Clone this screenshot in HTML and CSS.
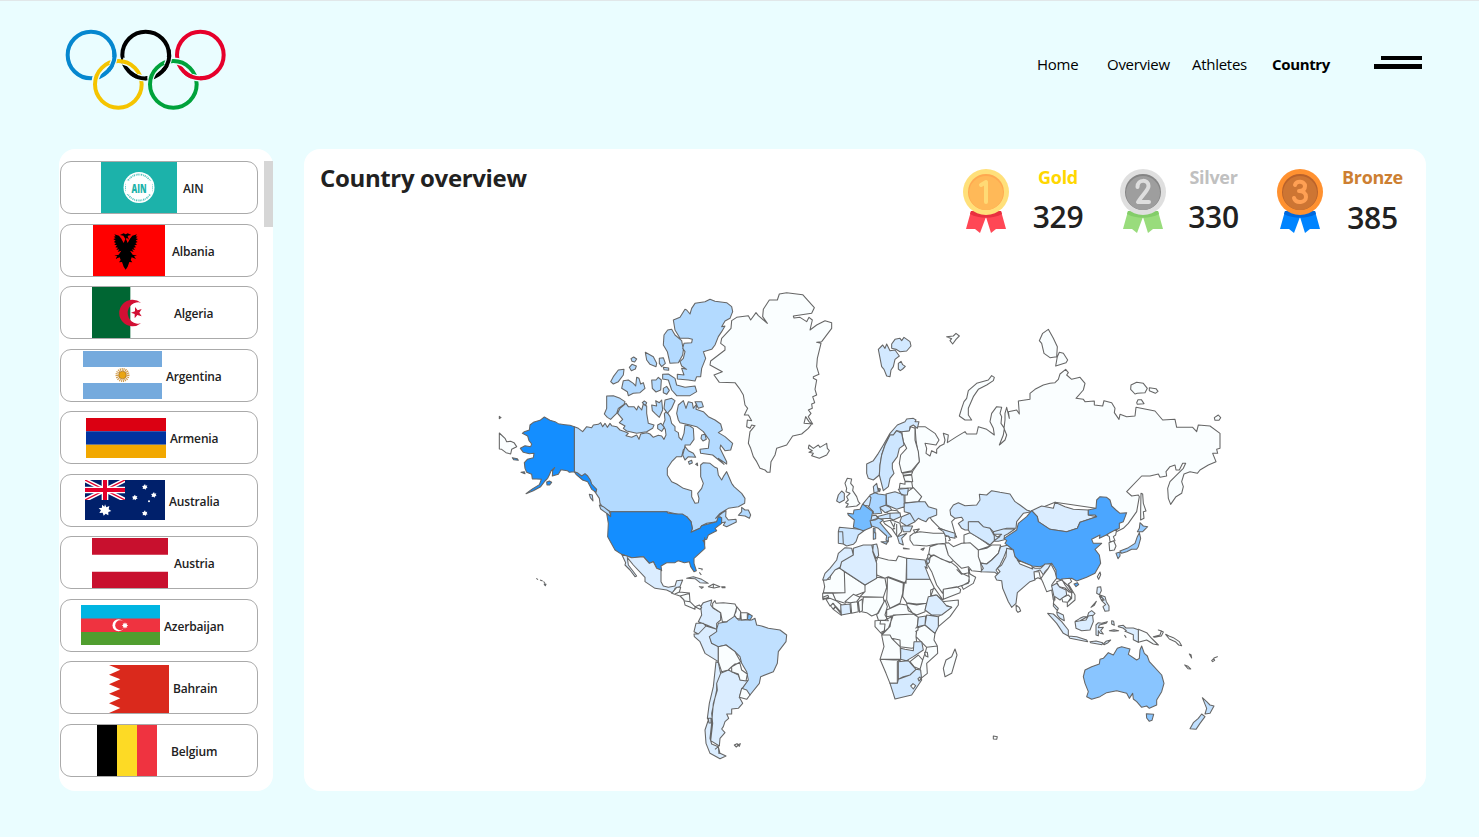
FILE: index.html
```
<!DOCTYPE html>
<html lang="en">
<head>
<meta charset="utf-8">
<title>Country overview</title>
<link rel="stylesheet" href="styles.css">
</head>
<body>
<header class="header">
  <svg class="logo" viewBox="75 87 486 246" fill="none" stroke-width="12">
    <circle cx="153" cy="165" r="70" stroke="#0687cf"/><circle cx="317" cy="165" r="70" stroke="#000"/><circle cx="481" cy="165" r="70" stroke="#e6002b"/>
    <g stroke="#eafdff" stroke-width="21"><path d="M166 268A70 70 0 0 1 242 184M248 183A70 70 0 0 1 281 200M330 268A70 70 0 0 1 382 186M396 183A70 70 0 0 1 446 200"/></g>
    <circle cx="235" cy="253" r="70" stroke="#f5c400"/><circle cx="400" cy="253" r="70" stroke="#00a23b"/>
    <path stroke="#eafdff" stroke-width="19" d="M223 172A70 70 0 0 1 216 196M387 172A70 70 0 0 1 380 196M316 235A70 70 0 0 1 290 230M480 235A70 70 0 0 1 454 230"/>
    <path stroke="#0687cf" d="M222 150A70 70 0 0 1 206 211"/><path stroke="#000" d="M386 150A70 70 0 0 1 370 211M322 235A70 70 0 0 1 272 219"/><path stroke="#e6002b" d="M490 234A70 70 0 0 1 436 219"/>
  </svg>
  <nav class="nav">
    <a class="nav-home">Home</a><a class="nav-overview">Overview</a><a class="nav-athletes">Athletes</a><a class="nav-country active">Country</a>
    <div class="burger"><i></i><i></i></div>
  </nav>
</header>
<main class="layout">
  <aside class="sidebar">
    <ul class="countries">
      <li><svg class="flag ain" viewBox="0 0 76 51"><path fill="#1cb2aa" d="M0 0h76v51H0z"/><circle cx="38" cy="25.500" r="15.500" fill="#fff"/><circle cx="38" cy="25.500" r="13" fill="none" stroke="#1cb2aa" stroke-width="1.800" stroke-dasharray="1.300 .9 .8 .7" opacity=".75"/><path fill="#fff" d="M25 19h26v13H25z"/><text class="ain-text" x="38" y="30.500" text-anchor="middle" textLength="15" lengthAdjust="spacingAndGlyphs">AIN</text></svg><span>AIN</span></li>
      <li><svg class="flag alb" viewBox="0 0 216 153"><path fill="red" d="M0 0h216v153H0z"/><path d="M108 44l-5-13-11-6-11 5 10 2 6 10-5 12-7-13-7-9-14-4 4 6-6 1 6 5-7 2 7 5-6 4 7 3-5 5 8 2-5 6 8 1-5 7 9-2-5 8 11-4-8 12-13 3 9 2-6 8 13-5 3 8-5 7 9-1 5 14 6 9 6-9 5-14 9 1-5-7 3-8 13 5-6-8 9-2-13-3-8-12 11 4-5-8 9 2-5-7 8-1-5-6 8-2-5-5 7-3-6-4 7-5-7-2 6-5-6-1 4-6-14 4-7 9-7 13-5-12 6-10 10-2-11-5-11 6z"/></svg><span>Albania</span></li>
      <li><svg class="flag alg" viewBox="0 0 231 153"><path fill="#063" d="M0 0h115v153H0z"/><path fill="#d21034" d="M147 47a40 40 0 1 0 0 62a32 32 0 1 1 0-62zM117 77l12-4 0-13 8 10 12-4-7 11 7 11-13-4-8 10 0-13z"/></svg><span>Algeria</span></li>
      <li><svg class="flag arg" viewBox="0 0 79 48"><path fill="#75aadd" d="M0 0h79v16H0zM0 32h79v16H0z"/><circle cx="39.500" cy="24" r="5.500" fill="none" stroke="#d09a48" stroke-width="3" stroke-dasharray="1 .75"/><circle cx="39.500" cy="24" r="3.800" fill="#e9a512" stroke="#9a641c" stroke-width=".6"/></svg><span>Argentina</span></li>
      <li><svg class="flag arm" viewBox="0 0 80 39" preserveAspectRatio="none"><path fill="#db0012" d="M0 0h80v13H0z"/><path fill="#0033a0" d="M0 13h80v13H0z"/><path fill="#f2a800" d="M0 26h80v13H0z"/></svg><span>Armenia</span></li>
      <li><svg class="flag aus" viewBox="0 0 240 120"><path fill="#00206b" d="M0 0h240v120H0z"/><svg width="120" height="60" viewBox="0 0 120 60"><path stroke="#fff" stroke-width="13" d="M0 0l120 60M120 0L0 60"/><path stroke="#e4002b" stroke-width="4" d="M0 0l120 60M120 0L0 60"/><path stroke="#fff" stroke-width="20" d="M60 0v60M0 30h120"/><path stroke="#e4002b" stroke-width="12" d="M60 0v60M0 30h120"/></svg><g fill="#fff"><path d="M60 73l4 9 9-4-2 10 8 5-9 3 0 10-8-5-6 6-3-9-10 1 5-8-7-6 10-2 0-9 7 6z"/><path id="star" d="M180 12l2 5 5-1-2 5 3 3-5 1-1 4-4-3-5 1 1-5-3-4 5-1z"/><use href="#star" x="-30" y="32"/><use href="#star" x="27" y="24"/><use href="#star" y="79"/><circle cx="192" cy="64" r="3"/></g></svg><span>Australia</span></li>
      <li><svg class="flag aut" viewBox="0 0 76 50"><path fill="#c8102e" d="M0 0h76v16.700H0zM0 33.700h76V50H0z"/></svg><span>Austria</span></li>
      <li><svg class="flag aze" viewBox="0 0 79 40"><path fill="#00b5e2" d="M0 0h79v14H0z"/><path fill="#ef3340" d="M0 13.500h79V27H0z"/><path fill="#509e2f" d="M0 27h79v13H0z"/><circle cx="37.500" cy="20.300" r="6" fill="#fff"/><circle cx="39.200" cy="20.300" r="5" fill="#ef3340"/><path fill="#fff" d="M44 17.200l.7 1.600 1.600-.6-.6 1.600 1.500.7-1.500.7.6 1.600-1.600-.6-.7 1.600-.7-1.600-1.600.6.6-1.600-1.500-.7 1.500-.7-.6-1.600 1.600.6z"/></svg><span>Azerbaijan</span></li>
      <li><svg class="flag bhr" viewBox="0 0 180 144"><path fill="#da291c" d="M180 0v144H0l34-15L0 115l34-15L0 86l34-14L0 58l34-15L0 29l34-15L0 0z"/></svg><span>Bahrain</span></li>
      <li><svg class="flag bel" viewBox="0 0 60 51"><path d="M0 0h20v51H0z"/><path fill="#fdda25" d="M20 0h20v51H20z"/><path fill="#ef3340" d="M40 0h20v51H40z"/></svg><span>Belgium</span></li>
    </ul>
    <div class="scrollbar"></div>
  </aside>
  <section class="card">
    <div class="card-head">
      <h1>Country overview</h1>
      <div class="medals">
        <div class="medal gold">
          <svg viewBox="0 0 46 64"><path fill="#ff4755" d="M8 42h15v6l-6 16-5-4H3zM38 42H23v6l5 16 5-4h10z"/><path fill="#e8303f" d="M8 42h30l1 3c-9 5-23 5-32 0z"/><circle cx="23" cy="23" r="23" fill="#ffe07a"/><circle cx="23" cy="23" r="18" fill="#ffa850"/><circle cx="23" cy="24" r="17" fill="#ffb958"/><path class="digit" stroke="#ffda75" d="M18 16l5-3v20"/></svg>
          <div><b>Gold</b><strong>329</strong></div>
        </div>
        <div class="medal silver">
          <svg viewBox="0 0 46 64"><path fill="#99dc7c" d="M8 42h15v6l-6 16-5-4H3zM38 42H23v6l5 16 5-4h10z"/><path fill="#83cd69" d="M8 42h30l1 3c-9 5-23 5-32 0z"/><circle cx="23" cy="23" r="23" fill="#dfdfdf"/><circle cx="23" cy="23" r="18" fill="#858585"/><circle cx="23" cy="24" r="17" fill="#9e9e9e"/><path class="digit" stroke="#dedede" d="M17.500 18c0-8 11-8 11-1 0 4-4 6-10.500 16H29"/></svg>
          <div><b>Silver</b><strong>330</strong></div>
        </div>
        <div class="medal bronze">
          <svg viewBox="0 0 46 64"><path fill="#0084ff" d="M8 42h15v6l-6 16-5-4H3zM38 42H23v6l5 16 5-4h10z"/><path fill="#0068dd" d="M8 42h30l1 3c-9 5-23 5-32 0z"/><circle cx="23" cy="23" r="23" fill="#ff9130"/><circle cx="23" cy="23" r="18" fill="#b9622b"/><circle cx="23" cy="24" r="17" fill="#cd7533"/><path class="digit" stroke="#ffa054" d="M18 16c1-5 10-4 10 1 0 4-3 5-6 5 4 0 7 2 7 6 0 6-10 7-12 1"/></svg>
          <div><b>Bronze</b><strong>385</strong></div>
        </div>
      </div>
    </div>
    <svg class="map" viewBox="0 0 2190 1440">
      <g class="none">
        <path d="M28 459L45 475 50 485 62 484 72 488 80 500 65 508 62 522 48 518 35 508 28 507ZM28 409l5 4-5 3z"/>
      </g>
      <g class="canada">
        <path d="M253 440L265 445 278 455 290 440 305 443 310 435 325 433 332 428 338 440 345 430 352 442 360 430 365 437 380 440 390 450 405 455 415 460 408 467 425 472 440 465 447 478 452 462 470 458 480 462 490 472 505 466 515 468 522 478 528 465 526 448 518 437 525 420 523 400 530 395 540 410 545 430 555 440 555 452 565 458 567 472 575 480 582 460 585 435 600 438 610 445 612 478 600 495 585 495 585 505 580 510 575 530 560 530 545 545 532 565 532 585 545 605 560 612 580 625 605 632 605 650 615 670 625 668 627 655 623 640 635 625 640 610 632 590 632 555 640 548 660 550 675 562 682 565 685 585 695 600 700 590 710 575 725 610 732 620 755 640 765 655 764 670 745 680 715 685 690 700 677 715 695 700 708 692 707 710 715 720 738 718 739 726 710 740 700 736 706 726 695 728 690 710 680 725 650 730 635 737 630 745 603 757 607 745 603 725 590 710 560 702 530 695H362L340 685 330 670 328 655 318 640 305 620 295 602 280 600 262 585 253 575Z"/>
        <path d="M298 643l9 2 2 18-8-10zM328 675L340 680 357 693 364 710 350 700 332 687ZM350 348L370 347 390 355 405 365 402 373 385 385 380 400 370 410 362 418 352 412 343 402 350 385ZM408 370L415 380 432 380 440 390 445 378 455 390 460 372 470 378 470 400 475 430 492 435 488 445 470 455 440 460 410 453 400 445 405 438 388 428 398 418 383 400 390 385ZM362 305L370 290 385 270 402 268 400 285 385 305 370 312ZM395 325L400 302 415 300 430 310 437 318 440 292 447 295 452 312 460 308 465 325 450 338 430 340 415 347 412 335ZM423 236l8-5 9 6-6 9-8-2zM418 262l8-9 13 5-3 9-12 5zM466 217L490 230 500 250 498 260 480 253 470 240ZM508 235L520 233 526 250 515 260 508 250ZM520 262l16 2 0 7-14-2zM485 300L498 300 505 292 514 300 512 330 498 336 487 325ZM485 375L500 378 497 362 508 368 515 360 518 390 508 412 495 400 487 392ZM503 435l10-5 10 12-8 12-12-8ZM457 368l6-5 7 5-4 9zM755 682L765 690 775 690 782 705 778 715 765 708 745 706 755 695Z"/>
        <g transform="translate(510 0)"><path d="M95 85L105 70 135 65 150 58 165 64 200 68 215 80 218 95 210 115 195 123 185 140 195 138 185 155 175 170 165 195 155 208 130 215 137 235 125 265 122 290 110 290 105 303 85 300 52 297 52 283 72 285 65 265 80 268 65 258 60 245 70 235 75 215 68 205 72 190 95 188 97 178 85 175 60 175 45 150 40 120 60 112 75 88 80 90 90 102ZM23 150L35 148 45 165 65 182 70 210 68 225 55 248 30 250 22 215 10 195 12 165ZM8 283L25 282 45 295 50 315 75 322 105 318 110 335 90 347 50 347 35 330 25 300 8 297ZM10 325l10-6 8 12-8 12-10-5zM12 385L15 360 35 355 45 362 35 385 22 400ZM55 420L50 400 55 375 70 362 78 385 85 365 97 368 100 385 110 372 108 388 130 395 145 410 165 420 182 432 187 450 175 458 195 470 218 490 212 510 195 512 182 495 180 505 200 545 200 552 175 535 192 553 158 525 122 520 120 508 145 505 148 480 130 455 110 440 90 435 60 428ZM105 365l20 0 5 15-15 5zM125 465l10-2 4 15-10 5-6-8zM75 500L85 512 100 520 107 532 85 530 75 540 68 525ZM85 545l10-4 2 8-9 4zM107 553l5-4 1 8z"/></g>
      </g>
      <g class="usa">
        <path d="M253 440V575L238 577 232 572 213 569 205 583 187 588 188 572 194 563 183 573 178 585 173 595 165 603 152 620 130 632 108 641 125 628 148 614 154 598 140 597 127 597 125 583 110 577 105 565 103 548 112 538 130 533 132 520 118 521 100 517 91 505 105 497 122 500 125 492 117 482 113 468 97 460 103 455 118 450 120 435 130 427 150 421 163 411 180 421 195 425 205 431 225 434 240 436ZM253 575L262 578 275 588 285 581 293 588 301 600 305 612 320 628 318 637 305 628 293 605 278 600 258 583ZM170 606l8-3 7 4-6 8-8 0ZM67 533l15 3 3 5-14-2ZM93 577l10-2 2 6z"/>
        <path d="M362 695H530L535 700 560 702 577 702 590 710 603 725 607 745 603 757 630 745 635 737 680 725 685 710 695 713 695 730 675 745 680 752 655 765 650 778 642 780 645 805 612 835 612 850 619 872 612 875 602 860 598 845 583 848 565 842 555 848 530 848 513 858 515 872 500 865 490 845 478 850 460 830 425 833 395 823 375 810 353 770 355 730 350 700 362 710ZM140 896l3 2zM150 900l8 3M160 905l5 3M163 911l5 2-2 4-3-3zM638 780l6 10M644 772v22"/>
      </g>
      <g transform="translate(0 630)">
        <g class="light"><path d="M395 193L425 203 460 200 478 220 490 215 500 235 513 240 513 275 520 288 535 292 555 288 560 272 578 270 570 290 555 295 550 310 530 300 495 295 465 275 465 262 430 225 412 203 415 225 440 258 435 260 420 240 405 225 407 218ZM590 265L610 260 635 268 655 280 630 278 615 266ZM632 350L640 338 665 330 662 345 670 355 692 368 692 390 680 400 680 418 650 405 625 395 635 375ZM618 400L640 400 648 408 625 432 612 425ZM612 432L625 432 648 408 680 418 680 428 660 440 665 460 685 468 685 515 645 490 630 455 613 440Z"/>
        <path d="M678 515L685 518 692 550 680 580 682 600 670 640 665 700 660 745 665 762 685 770 690 790 708 798 690 806 660 790 648 760 645 720 655 690 652 685 658 640 670 590ZM692 550L715 540 745 555 752 570 775 572 755 598 748 622 758 640 745 655 725 657 725 672 710 672 716 685 705 695 700 710 695 717 705 728 690 745 688 768 662 752 668 700 665 670 680 600 680 580ZM655 685h8v14h-6zM675 778l10-8 2 22"/></g>
        <g class="brazil"><path d="M680 418L685 400 712 395 718 378 735 378 745 390 785 390 795 385 800 405 815 408 835 415 870 420 890 435 888 455 865 485 862 520 850 545 812 560 808 580 780 615 755 598 775 570 770 545 755 520 750 500 735 485 708 465 685 470 665 460 658 440 680 425Z"/></g>
        <g class="none"><path d="M545 310L560 292H572L568 306 598 309 600 335 615 350 628 345 635 352 630 358 615 350 615 358 585 345 582 330 570 318ZM570 318L600 310M580 332L600 335M555 312L568 306M655 290l15-8 20 8-18 4zM670 282v12M628 290l12 1-5 4zM695 290h10v3h-9zM625 235l12 2-2 4M628 247l6 8M668 340L675 332 678 340 700 338 735 342 740 352 735 370 732 380 710 395 697 395 692 368 668 352ZM740 350L752 365 750 388 740 385 733 375 738 365ZM752 368h20v20l-18 2zM685 470L708 465 735 485 752 515 725 530 715 540 695 545 685 515ZM725 530L735 522 750 520 755 540 772 552 768 573 750 570 745 552 725 545ZM755 595L770 600 780 615 770 628 748 622ZM733 765l8-4 4 4-6 6zM743 764l8-3-3 8z"/></g>
        <path class="france" d="M775 370L787 378 780 390 772 388Z"/>
      </g>
      <g class="none"><path d="M725 122L740 112 775 107 782 120 798 98 805 107 832 130 818 110 820 88 838 60 862 60 868 42 890 38 938 44 973 83 965 100 910 108 912 114 930 112 950 125 957 112 967 120 960 150 980 135 1005 122 1025 128 1025 145 995 185 980 187 993 190 982 235 980 260 987 283 970 290 970 295 980 300 975 328 980 345 968 350 974 368 965 372 967 385 955 390 963 400 955 410 968 432 942 430 947 410 957 425 965 432 955 445 935 462 908 468 890 495 860 505 855 525 843 545 840 577 832 577 825 570 810 565 800 545 790 530 782 505 775 490 780 455 795 437 785 435 780 445 770 440 772 420 785 422 775 405 763 405 773 385 765 375 760 345 748 325 735 308 688 307 672 285 697 275 660 255 662 243 705 210 705 200 692 190 695 175 723 145ZM955 505L957 495 970 505 985 495 990 502 1010 490 1012 505 1018 512 1010 525 988 535 965 527 970 520 957 517 967 512Z"/></g>
      <g transform="translate(960 120)">
        <g class="none">
          <path d="M315 320L345 320 375 340 387 360 378 375 345 370 350 385 348 400 360 408 365 392 380 400 380 388 390 378 402 372 405 360 400 340 415 345 412 368 440 350 465 335 470 342 500 342 505 320 530 328 553 345 550 325 540 305 545 280 560 260 575 262 570 280 575 290 573 310 583 325 580 345 568 375 585 360 590 345 582 325 585 300 585 280 590 262 598 295 595 275 620 270 628 282 625 243 660 238 660 220 675 208 700 195 720 190 735 188 745 178 750 162 767 148 775 158 770 165 785 178 810 172 825 190 820 210 798 235 820 238 825 245 853 243 853 255 878 258 882 242 905 248 915 265 913 278 927 298 930 283 950 290 975 288 978 262 1035 273 1058 300 1095 298 1100 322 1148 322 1160 335 1165 315 1200 318 1230 340V385L1220 388 1223 400 1208 400 1218 425 1195 435 1170 450 1162 460 1140 455 1122 462 1115 485 1120 500 1115 520 1098 530 1082 553 1075 535 1073 505 1080 485 1095 470 1120 445 1127 430 1118 430 1108 450 1098 450 1095 435 1080 440 1068 455 1070 468 1050 472 1045 462 1020 468 995 468 950 515 965 528 985 525 988 530 980 575 955 610 940 625 910 640 858 565 735 547 665 575 600 560 500 575 435 595 425 605 435 640 440 652 415 635 390 625 375 610 365 600 340 560 318 530 300 500 300 465 328 425 318 360Z"/>
          <path d="M410 50l20-2 8-8 10 8-10 10-10 14-8-10 5-6zM475 212L500 190 535 180 545 167 553 172 550 182 530 195 505 208 490 230 475 265 475 285 485 300 465 300 448 288 455 265 462 245 470 235Z"/>
          <path d="M105 490L112 475 125 477 122 490 130 500 128 512 140 530 145 545 150 550 140 558 108 562 115 552 107 548 115 540 110 530 120 520 108 515 110 505ZM298 332L302 320 315 325 315 360 325 395 328 425 305 452 275 458 268 430 272 405 290 385 280 365 275 335ZM285 520L310 503 335 530 325 545 285 548ZM268 505L270 490 285 493 285 485 305 485 308 503 290 505ZM280 468L305 465 308 485 285 483ZM278 460l30-5-3 8-25 3z"/>
          <path d="M220 605L245 600 270 610 275 635 262 650 255 640 245 625 225 612ZM240 600l15 28M255 608l-5 20M260 612l0 32M226 575L240 570 262 572 268 580 240 583Z"/>
        </g>
        <g class="norway">
          <path d="M205 88L218 75 225 85 230 72 240 92 255 90 268 108 255 118 250 140 243 150 240 170 230 168 222 148 215 140ZM245 72L255 58 270 55 275 62 282 52 300 65 303 78 290 93 270 95 258 88 245 85ZM265 130l8-6 5 10 8 5-8 8-7 5-6-5z"/>
          <path d="M170 432L190 422 205 400 220 375 240 340 262 315 285 305 290 297 310 295 318 300 315 305 327 305 322 325 310 315 300 320 298 332 275 335 260 332 250 345 240 345 225 375 215 405 210 435 208 465 190 480 175 475 170 460ZM85 525L95 513 103 520 103 540 88 548 80 543Z"/>
          <path class="sweden" d="M208 465L210 435 215 405 225 375 240 345 250 345 260 332 275 340 282 375 268 385 262 410 247 430 247 445 252 460 240 475 235 500 220 512Z"/>
          <path d="M570 517L600 522 615 545 630 555 650 570 665 575 640 580 620 605 618 625 590 625 570 632 555 640 540 625 520 625 505 605 480 605 475 630 465 630 455 625 445 610 460 600 455 592 435 595 422 585 420 570 430 555 445 548 465 557 500 555 510 540 508 523 530 525 545 512Z"/>
          <path class="sweden" d="M190 500L200 490 205 515 192 518ZM205 505l6 2-2 8zM228 522L255 515 282 525 283 560 260 568 230 555ZM282 550L325 545 345 545 355 560 380 568 380 585 355 595 348 605 335 600 325 595 315 605 300 580 283 575ZM265 508L295 505 292 525 275 525ZM88 622L150 628 165 630 145 645 138 665 130 673 110 678 100 672 98 635 85 635ZM85 635L98 635 100 672 85 670ZM275 590L300 580 315 605 290 618 270 605ZM275 618L308 618 300 635 280 635ZM262 650L290 640 275 655 280 675 268 670Z"/>
          <path class="sweden" d="M208 562L225 555 240 562 245 570 225 578ZM200 590L240 580 240 595 205 597ZM240 580L270 578 272 590 250 600 240 595ZM180 588l18-2 8 8-25 8z"/>
        </g>
        <path class="germany" d="M180 525L195 518 205 522 228 525 228 555 210 562 215 580 190 582 190 575 175 560Z"/>
        <path class="norway" d="M160 550l18-22 5 5-5 25-18-2z"/>
        <path class="france" d="M113 580L130 582 132 570 150 568 158 552 188 575 182 605 185 622 160 632 130 622 133 600 115 585ZM190 625h5v12h-5z"/>
        <path class="germany" d="M180 602L195 600 205 595 220 600 210 608 230 632 245 650 235 652 235 665 228 660 230 648 205 625 185 618ZM213 665l20 0-4 8zM190 638l7 0 0 18-7 2z"/>
        <path class="none" d="M280 684l18 3-17-1zM333 688l10-4-4 7z"/>
      </g>
      <g transform="translate(1530 120)" class="none"><path d="M118 62L128 40 145 28 160 55 172 80 170 110 150 113 132 100 125 70ZM178 97L190 100 203 120 198 128 167 138 172 110ZM393 195L410 187 430 190 442 205 435 218 412 220 405 222 392 208ZM448 203l20 3 6 8-8 6-18-8zM410 248l4-9 10 0 8 12-20 2zM643 293l12-8 7 8-5 8-12 0zM423 520L428 522 430 550 438 573 430 575 432 595 422 600 422 570Z"/><path class="light" d="M95 572L125 558 160 565 165 547 195 560 220 568 265 570 265 585 290 590 240 607 232 625 200 635 150 628 115 605 112 590Z"/></g>
      <g transform="translate(960 660)">
        <g class="none">
          <path d="M505 150L530 145 545 135 572 135 565 160 545 180 530 192 512 188 505 170ZM405 130L415 128 430 140 455 130 480 128 505 150 505 170 512 190 515 215 485 212 475 200 455 205 430 182 415 165ZM462 105L480 98 500 110 530 130 540 138 505 150 480 128 462 130ZM300 108L310 100 330 95 370 100 405 100 408 130 380 132 350 138 310 135 300 120ZM310 90l18-3-12 12zM360 140L385 132 405 132 415 165 430 182 420 188 390 175 370 165 355 168ZM355 175L372 165 395 178 425 188 440 200 455 220 478 230 475 250 440 262 400 268 398 280 380 255 365 215 350 190ZM400 268L440 260 452 268 450 278 400 298ZM475 205L480 222 497 232 490 250 460 268 455 258 478 245ZM440 208l15 15 22-5 3-12"/>
          <path d="M203 172L235 180 258 182 265 168 290 175 288 250 235 230 225 235 200 225 197 190ZM40 240L60 238 65 210 90 205 103 215 105 278H40L44 260ZM103 215L165 255 165 275 140 285 120 295 105 310 75 300 68 280 105 278ZM165 255L200 232 225 235 230 262 220 292 170 290 150 290 165 275ZM232 232L280 250 278 280 270 310 240 325 230 300 232 262ZM290 238H360L372 262 362 290 350 310 320 312 290 308 278 290 283 250ZM395 305L445 300 445 315 420 350 385 380 385 350 425 322 405 315ZM362 270l12-5 25 35-22-15-15 2zM290 310L320 315 350 310 345 335 320 345 295 332ZM230 330L270 312 290 315 310 342 260 345 230 350ZM320 385L345 375 375 400 372 420 382 438 350 442 318 410ZM250 345L310 342 325 352 318 410 322 440 305 445 270 440 245 415 240 405 215 405 235 385ZM200 345L225 300 232 320 225 345 235 362 205 360ZM155 335L160 292 220 292 222 305 205 340 185 348 170 338ZM195 362L225 360 245 350 240 380 215 402 195 380ZM212 360l-2 12 15 0-2 20-12 6M215 405L240 405 245 415 270 420 272 478 210 478 222 440ZM210 478L250 480 272 480 262 485 262 550 240 550 228 520ZM300 485L325 465 338 480 330 508 312 500ZM350 442L382 438 383 460 350 490 352 520 333 535 330 508 338 480 345 460Z"/>
          <path d="M38 280L68 280 78 302 60 295 38 295ZM38 292l16-6 2 5-17 8zM48 298L60 295 78 302 95 315 92 340 80 325 70 310 60 318ZM62 318l6-8 8 8-6 10zM70 328l8-8 16 18 0 8zM105 305L130 283 150 292 140 305 120 308ZM122 308L142 305 145 335 125 340ZM145 305l12-8 0 35-8 5zM435 447L441 465 425 520 405 530 400 505 408 480 425 470Z"/>
        </g>
        <g class="light">
          <path d="M38 240L45 220 60 205 80 180 85 160 105 143 125 145 130 165 95 185 90 202 75 210 60 230 50 240ZM90 205L95 185 130 165 130 145 160 135 190 135 188 155 200 190 200 235 165 255ZM185 135l15-3 4 15 2 20-8 8-8-18zM290 175L345 180 352 205 345 200 360 238 290 238ZM355 290L380 285 395 300 410 318 425 322 395 345 365 345 345 330 350 310ZM350 345L385 350 385 380 375 400 345 375ZM325 352L347 348 345 375 322 380ZM92 315L120 312 122 340 94 345ZM512 215L555 217 570 230 558 210 570 195 580 175 590 150 605 145 595 135 572 140 565 160 545 180 530 192 512 190 520 205Z"/>
        </g>
        <g class="norway"><path d="M272 445L285 448 310 452 312 425 335 425 340 450 310 470 290 482 272 478ZM265 485L295 482 318 508 300 525 280 530 265 538ZM240 550L262 550 265 538 300 525 318 508 332 510 335 540 305 585 255 597 248 575ZM385 85L410 92 435 100 435 115 420 112 405 105 400 95ZM475 65L505 65 520 80 540 85 550 102 570 110 555 120 540 135 525 125 500 110 480 98 475 90ZM550 95l30-8 35 0-22 15-10 5 0 12-18 5-12 0 0-14zM348 180l5-8 8-5-3 20-5 5z"/></g>
        <path class="none" d="M302 558l7-7 8 6-7 10zM324 536l6-5 3 6-6 6zM344 457l8 0 2 14-8-4zM316 385l8-5 0 10-8 5M353 165l6-3 3 8-8 10zM405 110l10-2 6 12-6 2M550 103h25l-12 8z"/>
      </g>
      <g transform="translate(1470 660)">
        <path class="china" d="M155 32L172 50 175 65 210 88 260 95 292 85 300 67 350 50 345 45 325 45 325 30 348 25 350 0 360-10 380-8 390 0 395 18 408 30 420 40 440 38 430 65 418 70 418 85 390 100 358 115 360 105 335 118 340 130 365 130 345 148 358 165 362 190 345 220 320 232 290 243 275 235 245 240 228 235 228 210 215 190 195 195 180 200 155 198 115 180 100 165 100 150 75 130 80 122 72 115 110 90 115 70 140 50ZM282 252l10-4 4 6-8 6z"/>
        <path class="light" d="M80 145L100 150 105 170 115 182 155 200 165 205 182 205 195 192 213 192 205 205 195 215 190 225 180 210 165 215 165 240 150 245 130 262 112 278 108 310 95 322 85 305 68 265 65 242 50 240 45 230 60 215 52 205 65 195 78 170Z"/>
        <g class="none"><path d="M352 230l8-14 2 8-6 14zM380 105L390 98 410 88 407 105 400 110 405 122 390 125 388 110ZM387 128l14-6 7 16-5 12-14 2zM112 180L155 197 158 207 120 192ZM162 215l15 0 5 22-8-4-10 5zM205 205L213 192 225 215 230 235 222 245 215 255 222 275 225 300 220 300 215 270 200 275 190 250 183 235 190 225ZM230 245l15-5 20 18 12 20-10-2-12-12-18-4zM245 237L270 235 275 245 265 252 285 285 285 300 262 320 262 308 275 295 275 280 255 255ZM245 293l20-8 8 8-10 14-15-2zM108 315l10 8 4 10-8 4-5-6zM475 388L500 398 512 412 520 420 535 435 520 432 500 420 475 427ZM520 410l20-5 4-12 6 3-6 12-20 4zM535 390l10 3zM557 403l10 5 13 5 18 12 7 12-9-2-10-10-18-8zM628 462l5 2 2 10zM614 495l10 4 8 8-8-1zM695 482l6-6 3 5-6 4zM702 474l10-4zM40 708l12 2-2 8-10-1z"/></g>
        <g class="light"><path d="M215 258L230 250 240 262 258 270 260 285 245 295 240 300 225 290 220 310 235 325 232 332 220 318 222 290ZM230 335L250 345 253 362 240 355 232 345ZM203 340L220 342 245 365 265 390 265 408 250 400 230 370ZM265 408L290 410 320 420 323 425 270 415ZM285 365L300 362 322 350 326 338 335 332 345 340 338 348 340 365 330 390 305 392 288 385ZM285 364L300 355 310 350 322 350M300 362L318 360 325 348 338 346M348 375L355 368 365 370 382 365 378 370 358 375 355 383 370 382 362 392 370 402 360 400 355 392 355 407 348 405ZM330 425l18-2 20 5-2 6-34-6zM370 432l8-8 14-4-8 8-12 6zM388 392l14-3 14 3-14 2zM395 362l6 2 2 12-8-4zM352 262l10-2 2 12-6 12-8-4zM333 322l16-18-6 12zM360 285l15 5 4 15 8 13 0 14-12 2-6-14 8-6-12-12 8-2zM358 288l12 8-6 4zM415 378l15-2 8 8 22 0 15 5 0 38-15-8 0-15-25-10 4-2-10-8-14-4zM434 406l4 6z"/></g>
        <g class="japan"><path d="M480 68L490 78 503 80 488 95 472 95 478 85ZM478 98L482 115 475 140 470 148 455 148 440 155 425 160 420 153 445 143 465 130 472 110ZM408 160l12-4 0 12-6 8z"/></g>
        <g class="australia"><path d="M315 510L335 500 358 492 360 478 370 475 385 458 400 465 412 445 425 440 450 447 445 463 470 480 478 475 480 450 485 438 493 460 502 468 508 485 522 500 545 525 552 550 545 575 530 600 530 615 508 625 500 618 485 622 470 605 460 597 458 580 448 595 440 580 410 572 380 578 360 590 335 598 320 590 325 575 315 550 310 530ZM499 641l22 2-5 18-8 3-8-10z"/></g>
        <g class="brazil"><path d="M667 593L680 605 690 615 702 618 690 640 675 642 680 625ZM665 642L675 650 660 670 648 688 630 686 640 668 655 655Z"/></g>
      </g>
    </svg>
  </section>
</main>
</body>
</html>
```
FILE: styles.css
```
* { box-sizing: border-box; }
body {
  margin: 0;
  height: 837px;
  overflow: hidden;
  background: #eafdff;
  border-top: 1px solid #e1e7e9;
  color: #212121;
  font-family: "Open Sans", "Noto Sans", sans-serif;
}
.header {
  display: flex;
  justify-content: space-between;
  height: 148px;
  padding: 28px 57px 0 65px;
}
.logo { width: 162px; height: 82px; }
.nav {
  display: flex;
  align-items: flex-start;
  padding-top: 24px;
  color: #000;
  font-size: 15px;
  line-height: 22px;
}
.nav a { letter-spacing: -.28px; white-space: nowrap; }
.nav-home { width: 70px; }
.nav-overview { width: 85px; }
.nav-athletes { width: 80px; }
.nav-country { width: 102px; }
.nav .active { font-weight: 700; letter-spacing: -.35px; }
.burger {
  display: flex;
  flex-direction: column;
  align-items: flex-end;
  gap: 4px;
  width: 48px;
  padding-top: 3px;
}
.burger i { width: 41px; height: 4px; background: #000; }
.burger i + i { width: 48px; height: 5px; }
.layout {
  display: flex;
  gap: 31px;
  height: 642px;
  padding: 0 53px 0 59px;
}
.sidebar {
  display: flex;
  justify-content: space-between;
  width: 214px;
  padding: 12px 0 0 1px;
  border-radius: 16px;
  background: #fff;
}
.countries {
  display: flex;
  flex-direction: column;
  gap: 9.55px;
  width: 198px;
  margin: 0;
  padding: 0;
  list-style: none;
}
.countries li {
  display: flex;
  flex: none;
  align-items: center;
  height: 53px;
  border: 1px solid #aaa;
  border-radius: 11px;
  font-size: 12px;
  font-weight: 600;
  white-space: nowrap;
}
.countries span { padding-top: 2px; letter-spacing: -.15px; }
.flag { flex: none; }
.ain { width: 76px; height: 51px; margin: 0 6px 0 40px; }
.ain-text { fill: #1cb2aa; font-size: 13px; font-weight: 800; }
.alb { width: 72px; height: 51px; margin: 0 7px 0 32px; }
.alg { width: 77px; height: 51px; margin: 0 5.5px 0 30.5px; }
.arg { width: 79px; height: 48px; margin: 0 4.5px 0 21.5px; }
.arm { width: 80px; height: 40px; margin: 0 4px 0 25px; }
.aus { width: 80px; height: 40px; margin: 0 4px 0 24px; }
.aut { width: 76px; height: 50px; margin: 0 6px 0 31px; }
.aze { width: 79px; height: 40px; margin: 0 4.5px 0 19.5px; }
.bhr { width: 60px; height: 48px; margin: 2px 4.5px 0 47.5px; }
.bel { width: 60px; height: 51px; margin: 0 14.5px 0 35.5px; }
.scrollbar { width: 9px; height: 66px; background: #d6d6d6; }
.card {
  display: flex;
  flex-direction: column;
  flex: 1;
  border-radius: 16px;
  background: #fff;
}
.card-head {
  display: flex;
  justify-content: space-between;
  height: 131px;
  padding: 12px 0 0 16px;
}
h1 {
  margin: 0;
  font-size: 24px;
  font-weight: 700;
  line-height: 34px;
  letter-spacing: -.35px;
}
.medals { display: flex; padding-top: 8px; }
.medal { display: flex; width: 157px; }
.medal svg { width: 46px; height: 64px; flex: none; margin-left: .5px; }
.bronze { width: 150px; }
.medal div {
  display: flex;
  flex-direction: column;
  align-items: center;
  width: 99px;
  margin-top: -5px;
}
.silver div { width: 96px; }
.bronze div { width: 100px; }
.medal b { font-size: 18px; line-height: 26px; letter-spacing: -.3px; }
.medal strong {
  font-size: 30px;
  font-weight: 600;
  line-height: 40px;
  margin-top: 7px;
  letter-spacing: -.3px;
}
.bronze strong { margin-top: 8px; }
.gold b { color: gold; }
.silver b { color: silver; }
.bronze b { color: #cd7f32; }
.digit { fill: none; stroke-width: 4; stroke-linecap: round; stroke-linejoin: round; }
.map {
  width: 730px;
  height: 480px;
  margin-left: 185.5px;
  overflow: visible;
  stroke: #666;
  stroke-width: 3.2;
  stroke-linejoin: round;
}
.none { fill: #fafeff; }
.canada { fill: #b3daff; }
.usa { fill: #148eff; }
.china { fill: #4ba6ff; }
.france { fill: #74bcff; }
.australia { fill: #89c5ff; }
.japan { fill: #94caff; }
.germany { fill: #aad5ff; }
.brazil { fill: #c0e0ff; }
.norway { fill: #d3e9ff; }
.sweden { fill: #cde6ff; }
.light { fill: #dbedff; }
```
